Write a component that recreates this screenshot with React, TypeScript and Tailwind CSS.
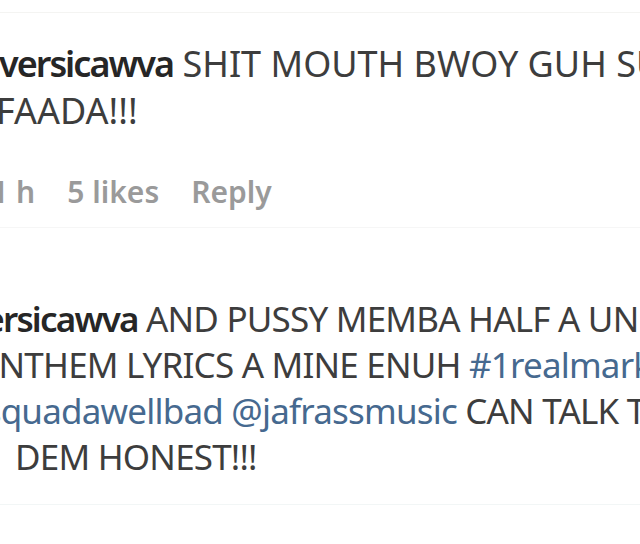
import React from 'react'

const body = 'text-[#3d3d3d]'
const link = 'text-[#46698f]'

export default function App() {
  return (
    <div className="w-[640px] h-[544px] overflow-hidden bg-white font-['Noto_Sans',sans-serif]">
      <div className="h-[13px] border-b border-[#f4f4f2]" />

      {/* first comment */}
      <div className="pt-[27px] text-[36px] leading-[47px] whitespace-nowrap">
        <div className="ml-[-1px]">
          <span className="font-semibold tracking-[-2px] text-[#262626]">versicawva</span>{' '}
          <span className={body}>SHIT MOUTH BWOY GUH SUCK</span>
        </div>
        <div className={`ml-[-4px] ${body}`}>FAADA!!!</div>
      </div>

      <div className="mt-[35px] flex gap-[32px] text-[30px] font-semibold text-[#9a9a9a] whitespace-nowrap ml-[-26px]">
        <span>21 h</span>
        <span>5 likes</span>
        <span>Reply</span>
      </div>

      <div className="mt-[13px] h-px bg-[#f6f6f6]" />

      {/* second comment */}
      <div className="pt-[68px] text-[35px] leading-[46px] tracking-[-0.8px] whitespace-nowrap">
        <div className="ml-[-33px]">
          <span className="font-semibold tracking-[-1.8px] text-[#262626]">versicawva</span>{' '}
          <span className={body}>AND PUSSY MEMBA HALF A UNDER</span>
        </div>
        <div className={`ml-[-23px] ${body}`}>
          ANTHEM LYRICS A MINE ENUH <span className={link}>#1realmark</span>
        </div>
        <div className={`ml-[-46px] ${body}`}>
          <span className={link}>@squadawellbad @jafrassmusic</span> CAN TALK TO
        </div>
        <div className={`ml-[15px] ${body}`}>DEM HONEST!!!</div>
      </div>

      <div className="mt-[24px] h-px bg-[#f2f6f6]" />
    </div>
  )
}
